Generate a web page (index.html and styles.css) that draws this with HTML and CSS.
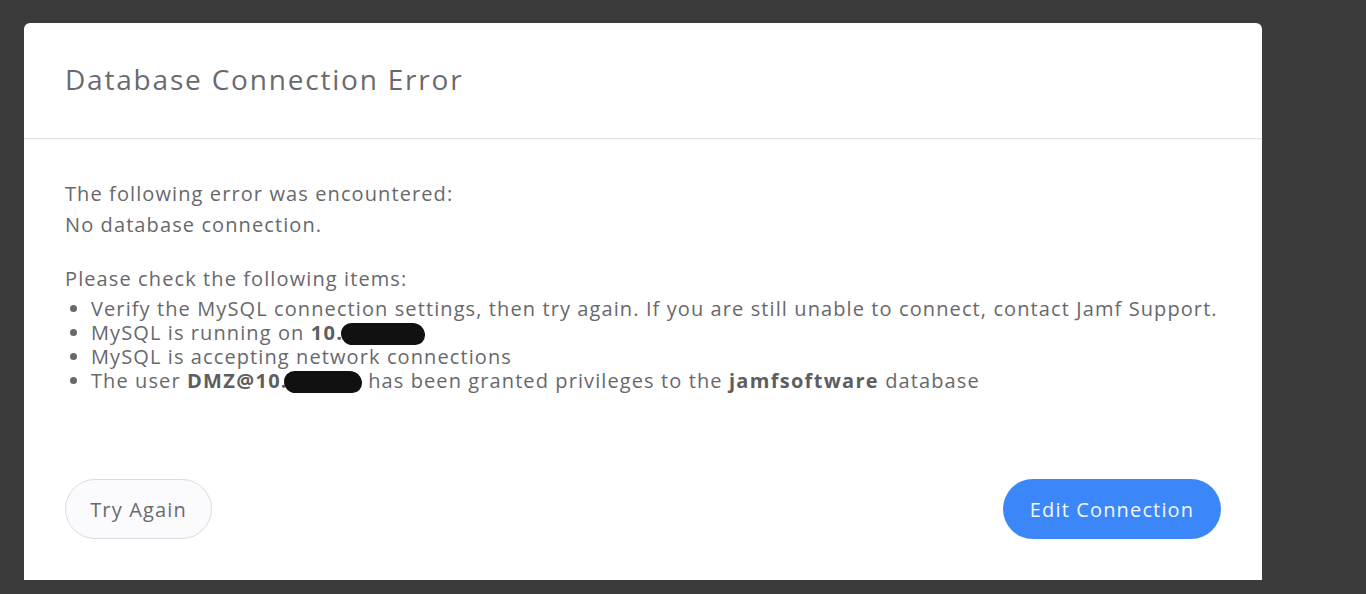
FILE: index.html
```html
<!DOCTYPE html>
<html>
<head>
<meta charset="utf-8">
<link rel="stylesheet" href="styles.css">
</head>
<body>
<div class="page">
  <div class="card">
    <div class="card-header">
      <h1 class="title">Database Connection Error</h1>
    </div>
    <div class="card-body">
      <p class="msg">The following error was encountered:</p>
      <p class="msg">No database connection.</p>
      <p class="msg check">Please check the following items:</p>
      <ul class="items">
        <li>Verify the MySQL connection settings, then try again. If you are still unable to connect, contact Jamf Support.</li>
        <li>MySQL is running on <b>10.</b><span class="redact r1"></span></li>
        <li>MySQL is accepting network connections</li>
        <li>The user <b>DMZ@10.</b><span class="redact r2"></span> has been granted privileges to the <b>jamfsoftware</b> database</li>
      </ul>
    </div>
    <div class="card-footer">
      <button class="btn btn-secondary">Try Again</button>
      <button class="btn btn-primary">Edit Connection</button>
    </div>
  </div>
</div>
</body>
</html>
```

FILE: styles.css
```css
html, body {
  margin: 0;
  padding: 0;
  background: #3c3b3c;
  height: 100%;
}
.page {
  padding: 23px 0 0 24px;
}
.card {
  width: 1238px;
  height: 557px;
  background: #ffffff;
  border-radius: 6px 6px 0 0;
  display: flex;
  flex-direction: column;
  font-family: "Open Sans", "Lato", sans-serif;
  color: #68686b;
}
.card-header {
  height: 116px;
  border-bottom: 1px solid #e3e3e7;
  box-shadow: 0 1px 2px rgba(0,0,0,0.04);
  display: flex;
  align-items: center;
  padding-left: 41px;
  box-sizing: border-box;
  padding-bottom: 4px;
}
.title {
  margin: 0;
  font-size: 28px;
  font-weight: 400;
  color: #6a6a6d;
  letter-spacing: 1.8px;
}
.card-body {
  padding: 39px 41px 0 41px;
  font-size: 20px;
  letter-spacing: 1.1px;
}
.msg {
  margin: 0;
  line-height: 31px;
}
.check {
  margin-top: 24px;
  line-height: 30px;
}
.items {
  margin: 3px 0 0 0;
  padding-left: 26px;
}
.items li {
  line-height: 24px;
  white-space: nowrap;
}
.items b {
  font-weight: 700;
  color: #5e5e61;
  letter-spacing: 1.3px;
}
.redact {
  display: inline-block;
  background: #111;
  height: 22px;
  vertical-align: -5px;
  border-radius: 12px 14px 11px 13px;
}
.r1 { width: 84px; margin-left: -2px; }
.r2 { width: 78px; margin-left: -4px; }
.card-footer {
  margin-top: auto;
  padding: 0 41px 41px 41px;
  display: flex;
  justify-content: space-between;
  align-items: center;
}
.btn {
  height: 60px;
  border-radius: 30px;
  font-family: "Open Sans", "Lato", sans-serif;
  font-size: 20px;
  letter-spacing: 1.15px;
  padding: 0;
  cursor: pointer;
}
.btn-secondary {
  width: 147px;
  background: #fbfbfd;
  border: 1px solid #dcdce0;
  color: #6a6a6d;
}
.btn-primary {
  width: 218px;
  background: #3b86f9;
  border: none;
  color: #f2f6ff;
}
```
